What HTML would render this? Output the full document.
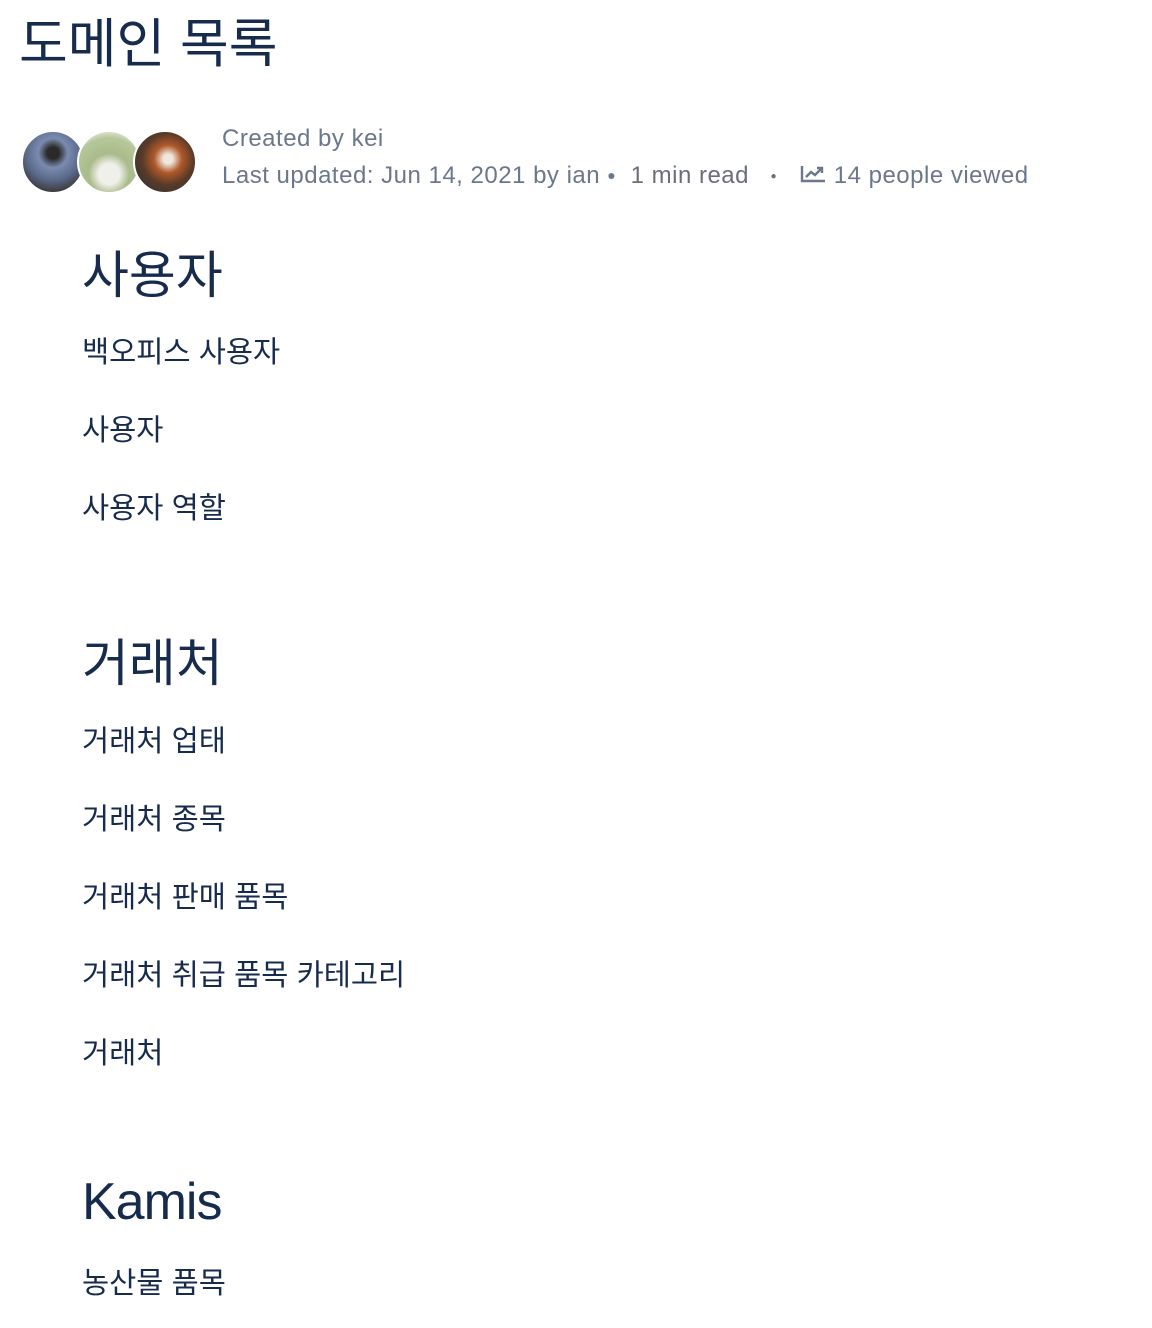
<!DOCTYPE html>
<html><head><meta charset="utf-8"><style>
body{margin:0;width:1152px;height:1328px;background:#fff;position:relative;font-family:"Liberation Sans","Noto Sans CJK KR",sans-serif;color:#172B4D;overflow:hidden}
.a{position:absolute;white-space:nowrap;line-height:1}
.t{font-size:53px;left:19px;top:18px}
.h{font-size:51px;left:82px}
.i{font-size:29.5px;left:82px}
.m{font-size:24px;color:#6B778C;left:222px;letter-spacing:0.5px}
.av{position:absolute;top:130px;width:64px;height:64px;border-radius:50%;border:2px solid #fff;box-sizing:border-box}
</style></head><body>
<div class="a t">도메인 목록</div>
<div class="av" style="left:21px;background:radial-gradient(circle at 50% 35%,#2a2a2a 12%,#7b8bb0 30%,#5a6a8a 55%,#3a3a3a 80%)"></div>
<div class="av" style="left:77px;background:radial-gradient(circle at 50% 70%,#f0f0ea 20%,#a9bb8a 40%,#b6c79a 70%,#f4f4f0 90%)"></div>
<div class="av" style="left:133px;background:radial-gradient(circle at 55% 45%,#f0e6dc 10%,#b0592a 30%,#5a3a28 55%,#3a3530 80%)"></div>
<div class="a m" style="top:127px">Created by kei</div>
<div class="a m" style="top:163px">Last updated: Jun 14, 2021 by ian <span style="font-size:14px;position:relative;top:-3px">●</span>&nbsp;&nbsp;<span style="color:#6b6f76">1 min read</span>&nbsp;&nbsp;&nbsp;<span style="font-size:10px;position:relative;top:-4px;color:#6b6f76">●</span>&nbsp;&nbsp;&nbsp;<svg width="28" height="22" viewBox="0 0 28 22" style="vertical-align:-2px"><path d="M3 3V18H26" fill="none" stroke="#6B778C" stroke-width="2.4"/><path d="M7 14L12 9L16 12L22 6M18 5H23V10" fill="none" stroke="#6B778C" stroke-width="2.4"/></svg>&nbsp;14 people viewed</div>
<div class="a h" style="top:250px">사용자</div>
<div class="a i" style="top:338px">백오피스 사용자</div>
<div class="a i" style="top:416px">사용자</div>
<div class="a i" style="top:494px">사용자 역할</div>
<div class="a h" style="top:638px">거래처</div>
<div class="a i" style="top:727px">거래처 업태</div>
<div class="a i" style="top:805px">거래처 종목</div>
<div class="a i" style="top:883px">거래처 판매 품목</div>
<div class="a i" style="top:961px">거래처 취급 품목 카테고리</div>
<div class="a i" style="top:1039px">거래처</div>
<div class="a h" style="top:1176px;font-size:52px;letter-spacing:-1px">Kamis</div>
<div class="a i" style="top:1269px">농산물 품목</div>
</body></html>
